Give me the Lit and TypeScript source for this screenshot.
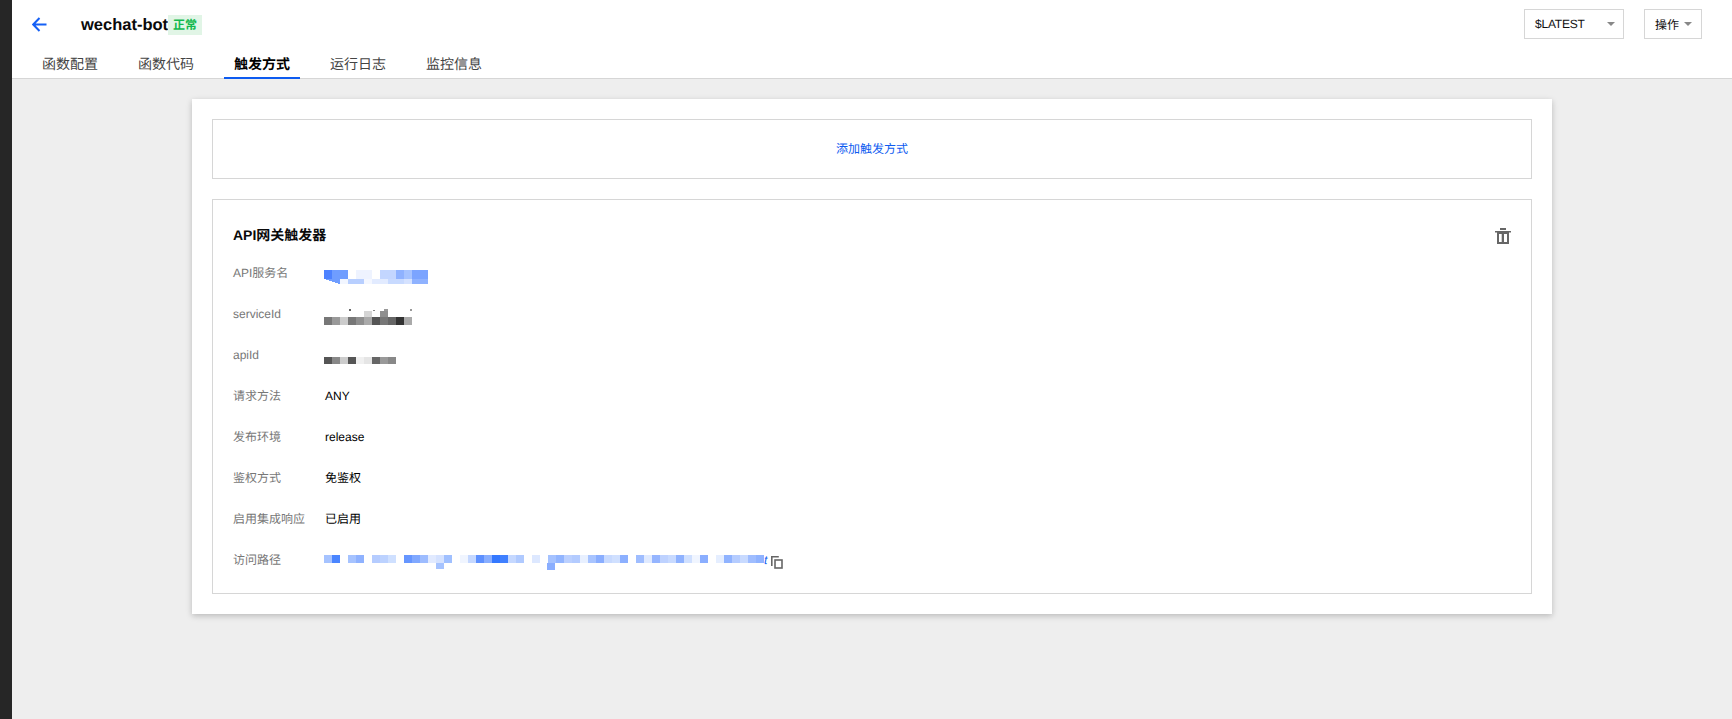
import { LitElement, html, css, svg } from "lit";
import { customElement } from "lit/decorators.js";

type Cell = [number, number, number, number, string];

const strip = (y: number, h: number, colors: string[], x0 = 0): Cell[] =>
  colors.map((c, i) => [x0 + i * 8, y, 8, h, c] as Cell).filter((c) => c[4] !== "");

const API_NAME: Cell[] = [
  ...strip(17, 9, ["#4d82ff", "#6f9dff", "#6f9dff", "", "#eef3ff", "#eef3ff", "", "#c3d6ff", "#c3d6ff", "#8fb2ff", "#a6c3ff", "#7ba4ff", "#7ba4ff"]),
  ...strip(26, 5, ["", "", "#f2f6ff", "#b8cfff", "#b8cfff", "#f4f7ff", "#e2ebff", "#e2ebff", "#c8daff", "#c8daff", "#d5e2ff", "#8fb2ff", "#8fb2ff"]),
];
const SERVICE_ID: Cell[] = [
  [25, 15, 2, 2, "#666"],
  [49, 16, 2, 1, "#888"],
  [60, 15, 4, 2, "#999"],
  [86, 15, 2, 2, "#999"],
  ...strip(17, 6, ["", "", "", "", "", "#d5d5d5", "", "#8f8f8f"]),
  ...strip(23, 8, ["#777", "#999", "#ccc", "#777", "#8f8f8f", "#aaa", "#555", "#777", "#666", "#333", "#aaa"]),
];
const API_ID: Cell[] = [
  ...strip(22, 7, ["#555", "#888", "#ccc", "#555", "#f0f0f0", "#e5e5e5", "#666", "#999", "#888"]),
];
const PATH: Cell[] = [
  ...strip(15, 8, [
    "#a6c3ff", "#4a85ff", "", "#a6c3ff", "#8fb2ff", "", "#b5ccff", "#bcd2ff", "#cfe0ff", "", "#6696ff", "#80a8ff", "#9dbcff", "#e1eaff", "#d5e2ff", "#a0c0ff", "", "#f0f5ff", "#c5d8ff", "#5d90ff", "#88aeff", "#3478ff",
    "#3f80ff", "#c5d8ff", "#b0caff", "", "#dde8ff", "", "#a5c2ff", "#92b5ff", "#bbd0ff", "#b3cbff", "#e8f0ff", "#a8c4ff", "#8aaeff", "#c8daff", "#d0e0ff", "#8cb0ff", "", "#9fbdff", "#e0eaff", "#95b5ff", "#bed2ff", "#c8daff", "#8fb2ff", "#d0e0ff", "#f0f5ff", "#8aaeff", "", "#e5eeff", "#90b3ff", "#b5ccff", "#c8daff", "#9fbdff", "#90b3ff",
  ]),
  [112, 23, 8, 6, "#a6c3ff"],
  [223, 23, 8, 7, "#8aaeff"],
];

@customElement("app-root")
export class AppRoot extends LitElement {
  static styles = css`
    :host {
      display: flex;
      min-height: 100vh;
      background: #eeeeee;
      font-family: "Liberation Sans", "Noto Sans CJK SC", sans-serif;
      font-size: 12px;
      color: #000;
      text-rendering: geometricPrecision;
    }
    .rail { width: 12px; flex: none; background: #262626; }
    .main { flex: 1; min-width: 0; display: flex; flex-direction: column; }
    .header {
      background: #fff;
      border-bottom: 1px solid #d6d6d6;
      height: 78px;
      display: flex;
      flex-direction: column;
    }
    .top { height: 48px; display: flex; align-items: flex-start; padding: 9px 30px 0 20px; box-sizing: border-box; }
    .back { width: 15px; height: 15px; margin-top: 8px; flex: none; }
    .name { margin: 1px 0 0 34px; font-size: 16.5px; font-weight: 700; line-height: 30px; color: #0a0a0a; }
    .tag {
      margin-top: 6px;
      height: 20px;
      line-height: 20px;
      width: 34px;
      text-align: center;
      background: #e1f5e6;
      color: #12b94e;
      font-weight: 700;
      font-size: 12px;
    }
    .spacer { flex: 1; }
    .select, .btn {
      height: 30px;
      box-sizing: border-box;
      border: 1px solid #d6d6d6;
      display: flex;
      align-items: center;
      background: #fff;
      color: #111;
    }
    .select { width: 100px; padding: 0 8px 0 10px; justify-content: space-between; margin-right: 20px; letter-spacing: -0.2px; }
    .btn { width: 58px; padding: 0 9px 0 10px; justify-content: space-between; }
    .caret { width: 0; height: 0; border-left: 4px solid transparent; border-right: 4px solid transparent; border-top: 4px solid #888; }
    .tabs { display: flex; gap: 20px; padding-left: 20px; height: 30px; }
    .tab {
      width: 76px;
      height: 31px;
      box-sizing: border-box;
      text-align: center;
      font-size: 14px;
      line-height: 32px;
      color: #444;
      border-bottom: 2px solid transparent;
    }
    .tab.on { color: #000; font-weight: 700; border-bottom-color: #0d5bf0; }
    .card {
      margin: 20px 180px 0;
      padding: 20px;
      background: #fff;
      box-shadow: 0 2px 6px rgba(0, 0, 0, 0.22);
      display: flex;
      flex-direction: column;
      gap: 20px;
    }
    .add {
      height: 60px;
      box-sizing: border-box;
      border: 1px solid #d6d6d6;
      padding-bottom: 2px;
      display: flex;
      align-items: center;
      justify-content: center;
      color: #0d5bf0;
    }
    .box { border: 1px solid #d6d6d6; padding: 21px 20px 13px; position: relative; }
    .title { font-size: 14px; font-weight: 700; line-height: 28px; height: 31px; color: #0a0a0a; }
    .trash { position: absolute; right: 20px; top: 28px; width: 16px; height: 16px; }
    .row { display: flex; height: 41px; align-items: center; }
    .label { width: 92px; flex: none; color: #777; line-height: 20px; }
    .value { display: flex; align-items: center; color: #000; }
    .mosaic { display: block; height: 41px; overflow: visible; margin: 2px 0 0 -1px; }
    .tail { color: #0d5bf0; width: 7px; font-size: 12px; font-style: italic; }
    .copy { width: 12px; height: 13px; display: block; margin-top: 6px; }
  `;

  private mosaic(cells: Cell[], w: number) {
    return html`<svg class="mosaic" width=${w} height="41" viewBox="0 0 ${w} 41" shape-rendering="crispEdges">
      ${cells.map((c) => svg`<rect x=${c[0]} y=${c[1]} width=${c[2]} height=${c[3]} fill=${c[4]}></rect>`)}
      ${w === 104 ? svg`<polygon points="0,26 16,26 16,31" fill="#6f9dff"></polygon>` : ""}
    </svg>`;
  }

  render() {
    const tabs = ["函数配置", "函数代码", "触发方式", "运行日志", "监控信息"];
    return html`
      <div class="rail"></div>
      <div class="main">
        <header class="header">
          <div class="top">
            <svg class="back" viewBox="0 0 15 15" fill="none" stroke="#1560f5" stroke-width="2">
              <path d="M14.500 7.500H1.500M7.500 1 1.200 7.500l6.300 6.500"></path>
            </svg>
            <span class="name">wechat-bot</span>
            <span class="tag">正常</span>
            <span class="spacer"></span>
            <div class="select"><span>$LATEST</span><i class="caret"></i></div>
            <div class="btn"><span>操作</span><i class="caret"></i></div>
          </div>
          <nav class="tabs">
            ${tabs.map((t, i) => html`<div class="tab ${i === 2 ? "on" : ""}">${t}</div>`)}
          </nav>
        </header>
        <section class="card">
          <div class="add">添加触发方式</div>
          <div class="box">
            <div class="title">API网关触发器</div>
            <svg class="trash" viewBox="0 0 16 16" fill="#666" fill-rule="evenodd">
              <path d="M5 0h6v2H5zM0 3h16v1.500H0zM2 4.500h12V16H2zM4 6v8h2.700V6zM9 6v8h3V6z"></path>
            </svg>
            <div class="row"><span class="label">API服务名</span>${this.mosaic(API_NAME, 104)}</div>
            <div class="row"><span class="label">serviceId</span>${this.mosaic(SERVICE_ID, 88)}</div>
            <div class="row"><span class="label">apiId</span>${this.mosaic(API_ID, 72)}</div>
            <div class="row"><span class="label">请求方法</span><span class="value">ANY</span></div>
            <div class="row"><span class="label">发布环境</span><span class="value">release</span></div>
            <div class="row"><span class="label">鉴权方式</span><span class="value">免鉴权</span></div>
            <div class="row"><span class="label">启用集成响应</span><span class="value">已启用</span></div>
            <div class="row">
              <span class="label">访问路径</span>
              <span class="value">
                ${this.mosaic(PATH, 440)}
                <span class="tail">t</span>
                <svg class="copy" viewBox="0 0 12 13" fill="none" stroke="#666" stroke-width="1.6">
                  <path d="M.8 10V.8h7"></path>
                  <rect x="4" y="4" width="7" height="8"></rect>
                </svg>
              </span>
            </div>
          </div>
        </section>
      </div>
    `;
  }
}
